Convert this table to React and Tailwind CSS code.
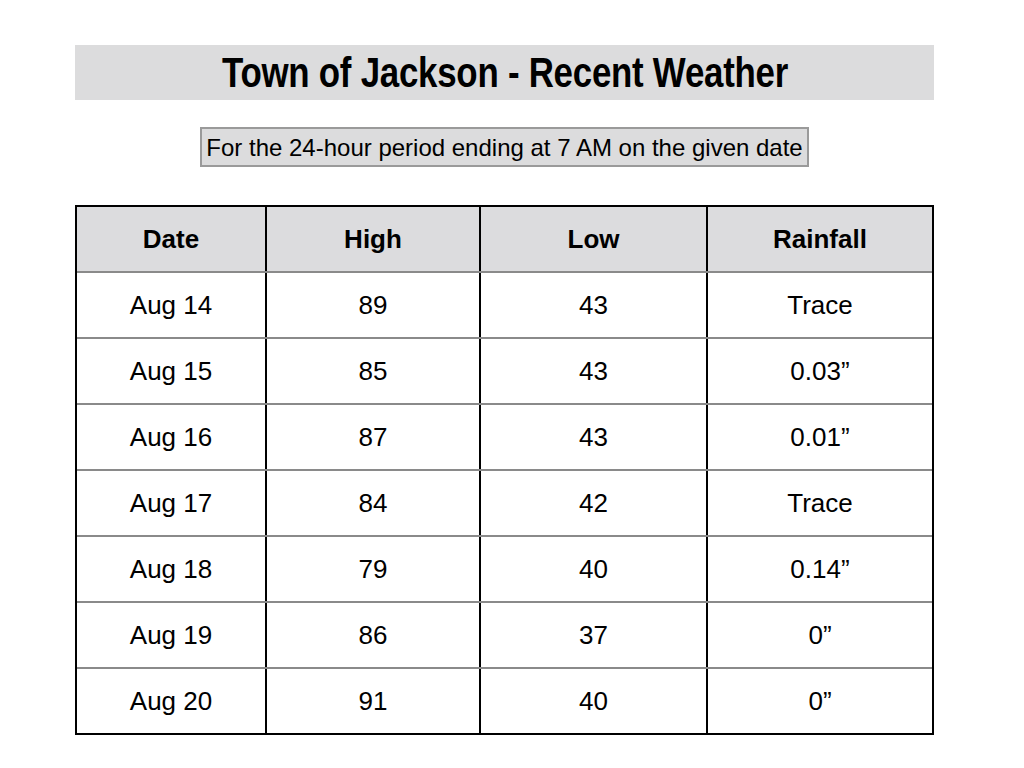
const rows = [
  { date: "Aug 14", high: "89", low: "43", rain: "Trace" },
  { date: "Aug 15", high: "85", low: "43", rain: "0.03”" },
  { date: "Aug 16", high: "87", low: "43", rain: "0.01”" },
  { date: "Aug 17", high: "84", low: "42", rain: "Trace" },
  { date: "Aug 18", high: "79", low: "40", rain: "0.14”" },
  { date: "Aug 19", high: "86", low: "37", rain: "0”" },
  { date: "Aug 20", high: "91", low: "40", rain: "0”" },
];

const Row = ({ cells, header }) => (
  <div
    className={`grid grid-cols-[190px_214px_227px_224px] ${
      header ? "h-[64px] bg-[#dcdcde] font-bold" : "h-[66px] border-t-2 border-[#8a8a8a]"
    }`}
  >
    {cells.map((c, i) => (
      <div
        key={i}
        className={`flex items-center justify-center ${
          i < 3 ? "border-r-2 border-black" : ""
        }`}
      >
        {c}
      </div>
    ))}
  </div>
);

const App = () => {
  return (
    <div
      className="w-[1024px] h-[768px] bg-white text-black pt-[45px]"
      style={{ fontFamily: '"Liberation Sans", Arial, sans-serif' }}
    >
      <div className="ml-[75px] w-[859px]">
        <div className="h-[55px] bg-[#dcdcdd] flex items-center justify-center">
          <h1 className="text-[42px] font-bold leading-none tracking-[-0.3px] scale-x-[0.83] whitespace-nowrap">
            Town of Jackson - Recent Weather
          </h1>
        </div>

        <div className="flex justify-center mt-[27px]">
          <div className="h-[40px] w-[609px] bg-[#dcdcdd] border-2 border-[#9a9a9a] flex items-center justify-center text-[24px] leading-none pt-[2px]">
            For the 24-hour period ending at 7 AM on the given date
          </div>
        </div>

        <div className="mt-[38px] border-2 border-black text-[26px] leading-none">
          <Row header cells={["Date", "High", "Low", "Rainfall"]} />
          {rows.map((r) => (
            <Row key={r.date} cells={[r.date, r.high, r.low, r.rain]} />
          ))}
        </div>
      </div>
    </div>
  );
};

export default App;
